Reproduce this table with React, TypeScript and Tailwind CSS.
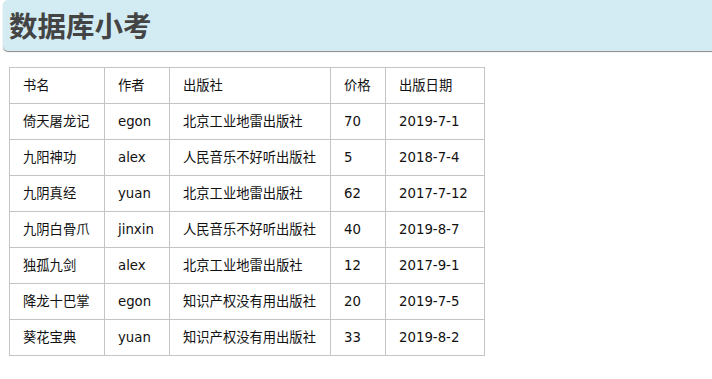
import React from "react";

const rows = [
  ["倚天屠龙记", "egon", "北京工业地雷出版社", "70", "2019-7-1"],
  ["九阳神功", "alex", "人民音乐不好听出版社", "5", "2018-7-4"],
  ["九阴真经", "yuan", "北京工业地雷出版社", "62", "2017-7-12"],
  ["九阴白骨爪", "jinxin", "人民音乐不好听出版社", "40", "2019-8-7"],
  ["独孤九剑", "alex", "北京工业地雷出版社", "12", "2017-9-1"],
  ["降龙十巴掌", "egon", "知识产权没有用出版社", "20", "2019-7-5"],
  ["葵花宝典", "yuan", "知识产权没有用出版社", "33", "2019-8-2"],
];

const widths = ["w-[95px]", "w-[65px]", "w-[161px]", "w-[55px]", "w-[99px]"];

export default function App() {
  return (
    <div className="w-[712px] h-[379px] bg-white overflow-hidden" style={{ fontFamily: '"DejaVu Sans", "Noto Sans CJK SC", sans-serif' }}>
      <div className="ml-[3px] w-[720px] h-[51px] rounded-[5px] bg-[#d3ecf3] shadow-[0_1px_1px_#888] flex items-center pl-[6px]">
        <h1 className="text-[28.5px] font-bold text-[#444] leading-none" style={{ fontFamily: '"Noto Sans CJK SC", sans-serif' }}>数据库小考</h1>
      </div>
      <table className="mt-[16px] ml-[9px] border-collapse text-[13.3px] text-[#111]">
        <thead>
          <tr className="h-[36px]">
            {["书名", "作者", "出版社", "价格", "出版日期"].map((h, i) => (
              <th key={i} className={`${widths[i]} border border-[#c4c4c4] pl-[13px] text-left font-normal`}>{h}</th>
            ))}
          </tr>
        </thead>
        <tbody>
          {rows.map((r, ri) => (
            <tr key={ri} className="h-[36px]">
              {r.map((c, ci) => (
                <td key={ci} className={`${widths[ci]} border border-[#c4c4c4] pl-[13px]`}>{c}</td>
              ))}
            </tr>
          ))}
        </tbody>
      </table>
    </div>
  );
}
